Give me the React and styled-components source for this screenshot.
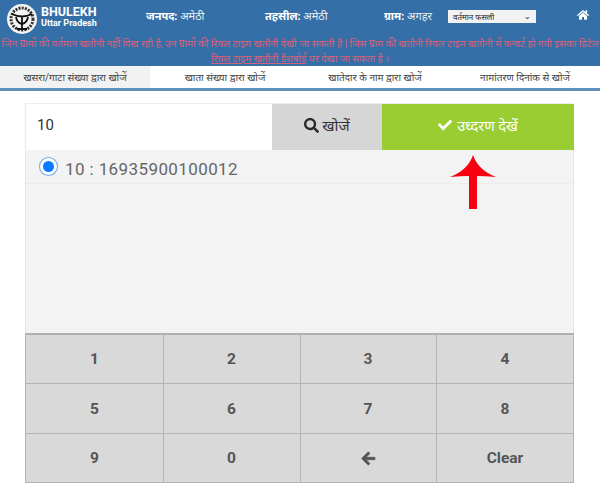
import React from "react";
import styled, { createGlobalStyle } from "styled-components";
import { FaSearch, FaCheck, FaArrowLeft, FaHome } from "react-icons/fa";

const Global = createGlobalStyle`
  html, body { margin: 0; padding: 0; background: #fff; }
  body { width: 600px; height: 494px; overflow: hidden; font-family: Roboto, "Noto Sans", "Noto Sans CJK SC", sans-serif; }
`;
const Page = styled.div`width: 600px; height: 494px; display: flex; flex-direction: column;`;
const Top = styled.header`background: #356fa8; height: 66px; display: flex; flex-direction: column;`;
const Bar = styled.div`height: 34px; display: flex; align-items: center; padding-left: 7px; color: #fff;`;
const Logo = styled.svg`width: 30px; height: 30px; flex: none; margin-top: 3px;`;
const Brand = styled.div`margin-left: 4px; width: 105px; display: flex; flex-direction: column; font-weight: 700; color: #fff;`;
const BrandTop = styled.span`font-size: 12.5px; line-height: 12px;`;
const BrandSub = styled.span`font-size: 9px; line-height: 11px;`;
const Field = styled.div`font-size: 11px; white-space: nowrap; width: ${p => p.$w}px; color: #eaf0f6; margin-top: -4px; b { color: #fff; font-weight: 700; }`;
const Select = styled.div`width: 88px; height: 13px; margin-top: -1px; background: #f2f2f2; display: flex; align-items: center; justify-content: space-between; padding: 0 5px; box-sizing: border-box; color: #222; font-size: 8px;`;
const HomeWrap = styled.div`margin-left: 41px; margin-top: -4px; display: flex; font-size: 12px; color: #fff;`;
const Notice = styled.div`height: 32px; text-align: center; font-size: 10px; line-height: 15px; color: #d9607a; white-space: nowrap; overflow: hidden; padding-top: 2px; box-sizing: border-box; span { display: block; } u { color: #d9607a; }`;
const Tabs = styled.nav`height: 22px; display: grid; grid-template-columns: repeat(4, 150px); background: #fff; border-bottom: 3px solid #5e8fbd;`;
const Tab = styled.div`background: ${p => p.$active ? "#f2f2f2" : "#fff"}; color: #444; font-size: 10px; display: flex; align-items: center; justify-content: center; white-space: nowrap;`;
const Main = styled.main`margin: 12px 0 0 25px; width: 549px; position: relative; display: flex; flex-direction: column;`;
const SearchRow = styled.div`display: grid; grid-template-columns: 247px 110px 192px; height: 47px; border-top: 1px solid #eee; box-sizing: border-box; box-shadow: 0 1px 1px #ddd;`;
const Input = styled.div`display: flex; align-items: center; padding: 0 0 4px 11px; font-size: 15px; color: #333; background: #fff; border-left: 1px solid #eee;`;
const SearchBtn = styled.div`background: #d6d6d6; display: flex; align-items: center; justify-content: center; gap: 3px; padding-bottom: 4px; font-size: 15px; color: #333; svg { font-size: 15px; color: #2a2a2a; }`;
const ViewBtn = styled.div`background: #9acd32; display: flex; align-items: center; justify-content: center; gap: 5px; padding-bottom: 4px; font-size: 14.5px; color: #fff; svg { font-size: 14px; }`;
const List = styled.div`height: 183px; background: #f3f3f3; border-right: 1px solid #e6e6e6; border-left: 1px solid #e6e6e6;`;
const Item = styled.div`height: 34px; box-sizing: border-box; border-bottom: 1px solid #ececec; display: flex; align-items: center; gap: 8px; padding: 5px 0 0 14px; font-size: 17px; color: #666; letter-spacing: .4px;`;
const Radio = styled.span`width: 17px; height: 17px; border-radius: 50%; background: #0a7bff; box-sizing: border-box; border: 3px solid #fff; box-shadow: 0 0 0 1px #6aa6ee; margin-top: -6px;`;
const Pad = styled.div`display: grid; grid-template-columns: 138px 137px 136px 136px; grid-template-rows: 49px 50px 1fr; background: #d9d9d9; border: 1px solid #b4b4b4; border-top: 2px solid #b0b0b0; box-sizing: border-box; width: 549px; height: 150px;`;
const Key = styled.div`display: flex; align-items: center; justify-content: center; padding-right: ${p => p.$nudge ? 1 : 0}px; font-weight: 700; font-size: 15.5px; color: #555; border-right: ${p => p.$last ? 0 : 1}px solid #b4b4b4; border-bottom: ${p => p.$bottom ? 0 : 1}px solid #b4b4b4; svg { font-size: 15px; stroke: #555; stroke-width: 30px; }`;
const Arrow = styled.svg`position: absolute; left: 424px; top: 52px; width: 48px; height: 54px;`;

const keys = ["1","2","3","4","5","6","7","8","9","0","back","Clear"];

export default function App() {
  return (
    <Page>
      <Global />
      <Top>
        <Bar>
          <Logo viewBox="0 0 30 30">
            <circle cx="15" cy="15" r="15" fill="#f4f4f4" />
            <circle cx="15" cy="15" r="11" fill="none" stroke="#333" strokeWidth="3" strokeDasharray="2 1.2" />
            <path d="M5 10 Q15 15 25 10 M15 13V25 M10 25H20 M9 13 Q10 19 15 20 Q20 19 21 13" fill="none" stroke="#111" strokeWidth="1.8" />
          </Logo>
          <Brand>
            <BrandTop>BHULEKH</BrandTop>
            <BrandSub>Uttar Pradesh</BrandSub>
          </Brand>
          <Field $w={119}><b>जनपद:</b> अमेठी</Field>
          <Field $w={119}><b>तहसील:</b> अमेठी</Field>
          <Field $w={64}><b>ग्राम:</b> अगहर</Field>
          <Select><span>वर्तमान फसली</span><span>⌄</span></Select>
          <HomeWrap><FaHome /></HomeWrap>
        </Bar>
        <Notice>
          <span>जिन ग्रामों की वर्तमान खतौनी नहीं दिख रही है, उन ग्रामों की रियल टाइम खतौनी देखी जा सकती है | जिस ग्राम की खतौनी रियल टाइम खतौनी में कन्वर्ट हो गयी इसका डिटेल</span>
          <span><u>रियल टाइम खतौनी डैशबोर्ड</u> पर देखा जा सकता है ।</span>
        </Notice>
      </Top>
      <Tabs>
        <Tab $active>खसरा/गाटा संख्या द्वारा खोजें</Tab>
        <Tab>खाता संख्या द्वारा खोजें</Tab>
        <Tab>खातेदार के नाम द्वारा खोजें</Tab>
        <Tab>नामांतरण दिनांक से खोजें</Tab>
      </Tabs>
      <Main>
        <SearchRow>
          <Input>10</Input>
          <SearchBtn><FaSearch />खोजें</SearchBtn>
          <ViewBtn><FaCheck />उध्दरण देखें</ViewBtn>
        </SearchRow>
        <List>
          <Item><Radio />10 : 16935900100012</Item>
        </List>
        <Pad>
          {keys.map((k, i) => (
            <Key key={k} $last={i % 4 === 3} $bottom={i >= 8} $nudge={i % 4 === 1 || i % 4 === 2}>
              {k === "back" ? <FaArrowLeft /> : k}
            </Key>
          ))}
        </Pad>
        <Arrow viewBox="0 0 48 54">
          <path d="M24 0 Q29 15 47 22 Q36 21 28 21 V54 H20 V21 Q12 21 1 22 Q19 15 24 0Z" fill="#f8000f" />
        </Arrow>
      </Main>
    </Page>
  );
}
